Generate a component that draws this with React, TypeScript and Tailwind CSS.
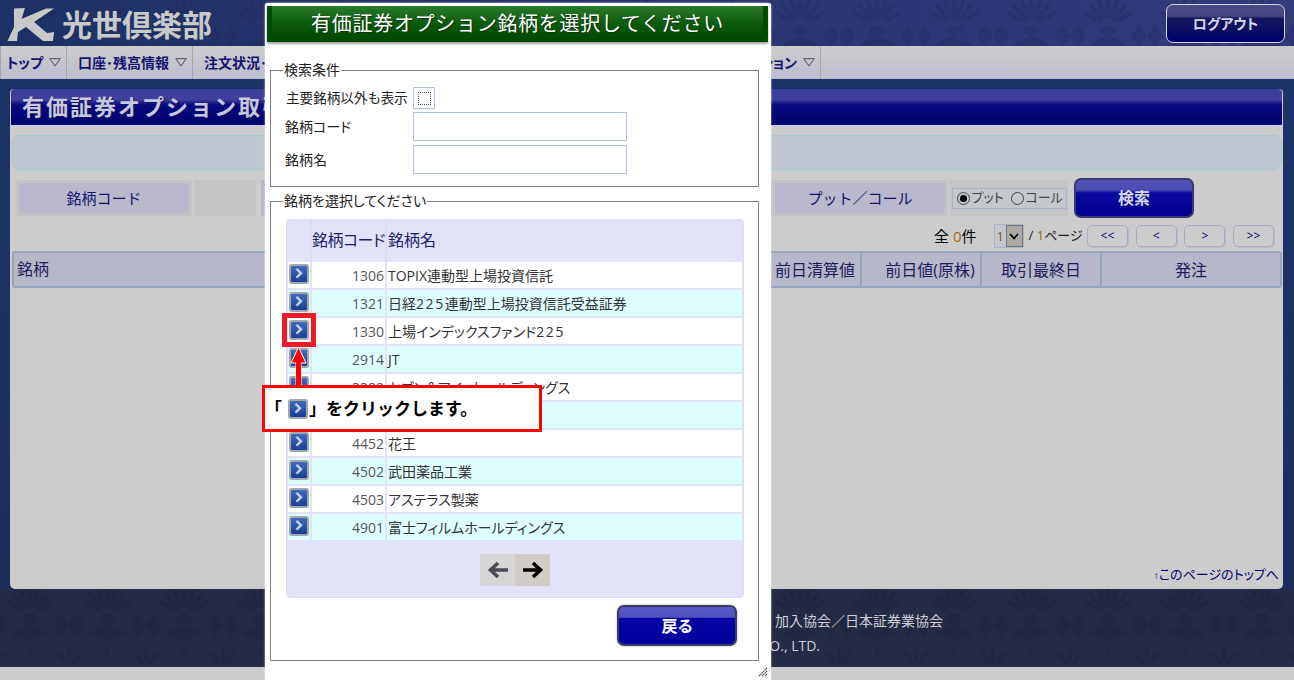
import React from "react";

function Damask({ id, color, opacity }: { id: string; color: string; opacity: number }) {
  return (
    <svg className="absolute inset-0 h-full w-full" aria-hidden="true">
      <defs>
        <pattern id={id} width="77" height="84" patternUnits="userSpaceOnUse" x="-8" y="-6">
          <g fill={color} opacity={opacity}>
            {[-60, -40, -20, 0, 20, 40, 60].map((a) => (
              <ellipse key={a} cx="38" cy="14" rx="2.6" ry="11" transform={`rotate(${a} 38 32)`} />
            ))}
            <ellipse cx="38" cy="36" rx="8" ry="5" />
            <path d="M38 40 C30 46 22 46 18 54 C26 52 32 52 38 60 C44 52 50 52 58 54 C54 46 46 46 38 40Z" />
            <path d="M0 42 L8 30 L16 42 L8 54Z M77 42 L69 30 L61 42 L69 54Z" />
            {[-40, 0, 40].map((a) => (
              <ellipse key={a} cx="0" cy="72" rx="2.2" ry="8" transform={`rotate(${a} 0 84)`} />
            ))}
            {[-40, 0, 40].map((a) => (
              <ellipse key={a} cx="77" cy="72" rx="2.2" ry="8" transform={`rotate(${a} 77 84)`} />
            ))}
            <circle cx="38" cy="68" r="3" />
            <circle cx="28" cy="74" r="2" />
            <circle cx="48" cy="74" r="2" />
          </g>
        </pattern>
      </defs>
      <rect width="100%" height="100%" fill={`url(#${id})`} />
    </svg>
  );
}

function Tri() {
  return (
    <svg width="12" height="9" viewBox="0 0 12 9" className="shrink-0" aria-hidden="true">
      <path d="M0.7 0.7H11.3L6 8Z" fill="none" stroke="#4a4a6a" strokeWidth="1" />
    </svg>
  );
}

function NavItem({ label, w }: { label: string; w: string }) {
  return (
    <div className={`flex h-full items-center justify-end gap-[6px] border-r border-[#a8a8a8] pr-[5px] ${w}`}>
      <span className="whitespace-nowrap text-[14px] font-bold text-[#14146e] [font-feature-settings:'palt']">{label}</span>
      <Tri />
    </div>
  );
}

function GoIcon() {
  return (
    <div className="flex h-[20px] w-[20px] items-center justify-center rounded-[3px] border-2 border-[#a2a7ad] bg-linear-to-b from-[#3f6cbc] to-[#1b3f96]">
      <svg width="10" height="12" viewBox="0 0 10 12" aria-hidden="true">
        <path d="M2.5 0.8L7 5.2L2.5 9.6" fill="none" stroke="#c6cfe4" strokeWidth="2.4" />
      </svg>
    </div>
  );
}

const d = (s: string) => <span className="tracking-[1.6px]">{s}</span>;

const rows: { code: string; name: React.ReactNode }[] = [
  { code: "1306", name: "TOPIX連動型上場投資信託" },
  { code: "1321", name: <>日経{d("225")}連動型上場投資信託受益証券</> },
  { code: "1330", name: <>上場インデックスファンド{d("225")}</> },
  { code: "2914", name: "JT" },
  { code: "3382", name: "セブン＆アイ・ホールディングス" },
  { code: "4063", name: "信越化学工業" },
  { code: "4452", name: "花王" },
  { code: "4502", name: "武田薬品工業" },
  { code: "4503", name: "アステラス製薬" },
  { code: "4901", name: "富士フィルムホールディングス" },
];

function HeadCell({ children, w, cls = "" }: { children: React.ReactNode; w: string; cls?: string }) {
  return (
    <div className={`flex h-full items-center justify-center border-r-2 border-[#94a5bd] text-[16px] text-[#1c1c60] ${w} ${cls}`}>
      {children}
    </div>
  );
}

function PageBtn({ label }: { label: string }) {
  return (
    <div className="flex h-[22px] w-[41px] items-center justify-center rounded-[5px] border border-[#a9a9c6] bg-[#cccccc] text-[12px] text-[#00006a] shadow-[1px_1px_0_#bcbcc8]">
      {label}
    </div>
  );
}

export default function App() {
  return (
    <div className="relative h-[680px] w-[1294px] overflow-hidden bg-[#cccccc] font-['Open_Sans','Noto_Sans_CJK_JP',sans-serif] text-[14px]">
      {/* header */}
      <header className="relative flex h-[46px] items-center justify-between overflow-hidden bg-linear-to-r from-[#1b3366] via-[#2a3470] to-[#333b7c] pl-[7px] pr-[9px]">
        <Damask id="dh" color="#23285e" opacity={0.4} />
        <div className="relative flex items-center gap-[7px]">
          <svg width="48" height="36" viewBox="0 0 48 36" aria-hidden="true">
            <path
              d="M7 3.5L18 3L14.5 14L39 3.5L47 3.5L27 17L40 28L47 27L46 36L36 36L19 22L11 27L10 36L0.5 36L7 22Z"
              fill="#c9c9c9"
            />
          </svg>
          <span className="font-['Noto_Sans_CJK_JP',serif] text-[30px] font-bold leading-none text-[#c9c9c9]">光世倶楽部</span>
        </div>
        <div className="relative flex h-[39px] w-[119px] items-center justify-center rounded-[7px] border border-[#d5d5dc] bg-[linear-gradient(#4a4a86_0,#46467f_30%,#17175f_36%,#00006a_100%)] text-[14px] font-bold text-[#d8d8e4] [font-feature-settings:'palt']">
          ログアウト
        </div>
      </header>

      {/* nav */}
      <nav className="flex h-[33px] bg-linear-to-b from-[#cccccc] to-[#bdbdce]">
        <div className="h-full w-[1px] bg-[#a8a8a8]" />
        <NavItem label="トップ" w="w-[66px]" />
        <NavItem label="口座･残高情報" w="w-[126px]" />
        <NavItem label="注文状況･約定照会" w="w-[154px]" />
        <NavItem label="株式取引" w="w-[120px]" />
        <NavItem label="有価証券オプション" w="w-[354px]" />
      </nav>

      {/* main */}
      <main className="h-[510px] bg-linear-to-b from-[#1b3468] to-[#1e2c5c] pl-[10px] pr-[11px] pt-[10px]">
        <section className="flex h-[500px] flex-col rounded-b-[5px] rounded-t-[4px] bg-[#cccccc]">
          <div className="relative mx-[1px] flex h-[36px] items-center overflow-hidden rounded-t-[4px] border-b border-[#0000a0] bg-[linear-gradient(#3c3c98_0,#40409c_30%,#0a0a80_45%,#00006e_100%)] pl-[11px]">
            <span className="text-[22px] font-bold tracking-[2px] text-[#c8c8dc] [text-shadow:1px_1px_1px_#111166]">
              有価証券オプション取引
            </span>
          </div>

          <div className="ml-[2px] mr-[1px] mt-[10px] h-[35px] rounded-[8px] border border-[#9ccfcf] bg-[#c0c6d0]" />

          <div className="mt-[8px] flex h-[40px] items-center pl-[6px]">
            <div className="flex h-[36px] w-[176px] items-center justify-center border-[3px] border-[#c4c4c4] bg-[#b9b8cc] text-[15px] text-[#14146e]">
              銘柄コード
            </div>
            <div className="ml-[2px] h-[36px] w-[62px] bg-[#c4c4c4]" />
            <div className="ml-[5px] h-[36px] w-[511px] bg-[#b9b8cc]" />
            <div className="flex h-[36px] w-[176px] items-center justify-center border-[3px] border-[#c4c4c4] bg-[#b9b8cc] text-[15px] text-[#14146e]">
              プット／コール
            </div>
            <div className="ml-[2px] flex h-[36px] w-[118px] items-center justify-center bg-[#c4c4c4]">
              <div className="flex h-[21px] w-[115px] items-center gap-[2px] whitespace-nowrap border border-[#a5b4cb] bg-[#c4c8cc] pl-[4px] text-[13px] text-[#444] [font-feature-settings:'palt']">
                <span className="flex h-[13px] w-[13px] shrink-0 items-center justify-center rounded-full border border-[#444]">
                  <span className="h-[7px] w-[7px] rounded-full bg-black" />
                </span>
                <span className="w-[37px]">プット</span>
                <span className="h-[13px] w-[13px] shrink-0 rounded-full border border-[#444]" />
                <span>コール</span>
              </div>
            </div>
            <div className="ml-[6px] flex h-[40px] w-[120px] items-center justify-center rounded-[7px] border-2 border-[#3a3a70] bg-[linear-gradient(#5252b8_0,#4a4ab0_28%,#0808a0_36%,#00008c_100%)] text-[16px] font-bold text-[#d4d4e6]">
              検索
            </div>
          </div>

          <div className="mt-[5px] flex h-[26px] items-center justify-end pr-[9px]">
            <span className="mr-[17px] text-[15px] text-black">
              全 <span className="text-[#a06a10]">0</span>件
            </span>
            <div className="flex h-[24px] w-[30px] border border-[#a5b4cb] bg-[#c4c8cc]">
              <span className="w-[11px] pl-[2px] text-[13px] leading-[22px] text-[#7a5a20]">1</span>
              <span className="flex flex-1 items-center justify-center border border-[#777] bg-[#aca9a2]">
                <svg width="10" height="7" viewBox="0 0 10 7" aria-hidden="true">
                  <path d="M1 1L5 5.4L9 1" fill="none" stroke="#000" strokeWidth="1.8" />
                </svg>
              </span>
            </div>
            <span className="ml-[5px] mr-[4px] whitespace-nowrap text-[13px] text-[#222]">
              / <span className="text-[#a06a10]">1</span>ページ
            </span>
            <div className="flex gap-[7.7px]">
              <PageBtn label="<<" />
              <PageBtn label="<" />
              <PageBtn label=">" />
              <PageBtn label=">>" />
            </div>
          </div>

          <div className="ml-[2px] mr-[1px] mt-[2px] flex h-[37px] items-center rounded-[3px] border-2 border-[#94a5bd] bg-[#b7b7ca]">
            <div className="h-full flex-1 pl-[3px] text-[16px] leading-[33px] text-[#1c1c60]">銘柄</div>
            <HeadCell w="w-[92px]">前日清算値</HeadCell>
            <HeadCell w="w-[120px]" cls="pl-[18px]">前日値(原株)</HeadCell>
            <HeadCell w="w-[120px]">取引最終日</HeadCell>
            <div className="flex h-full w-[178px] items-center justify-center text-[16px] text-[#1c1c60]">発注</div>
          </div>

          <div className="mt-auto pb-[5px] pr-[4px] text-right text-[13px] text-[#00006a] [font-feature-settings:'palt']">
            <span className="font-['Liberation_Sans',sans-serif] text-[10px]">↑</span>このページのトップへ
          </div>
        </section>
      </main>

      {/* footer */}
      <footer className="relative h-[78px] overflow-hidden bg-[#252a47] text-[#cfcfd4]">
        <Damask id="df" color="#1a1c30" opacity={0.3} />
        <div className="relative w-[943px] pt-[22px] text-right text-[14px] leading-[20px]">加入協会／日本証券業協会</div>
        <div className="relative mt-[5px] w-[820px] text-right text-[14px] leading-[20px]">CO., LTD.</div>
      </footer>

      {/* modal */}
      <div className="absolute left-[265px] top-[3px] h-[677px] w-[506px] rounded-t-[3px] bg-white px-[5px] text-[14px] text-[#222] shadow-[0_0_2px_#eeeeee] [font-feature-settings:'palt']">
        <div className="-mx-[3px] mt-[3px] flex h-[36px] w-[501px] items-center justify-center border-x-[5px] border-[#004c00] bg-linear-to-b from-[#2b7a2b] via-[#0b5a0b] to-[#004600] text-[20px] tracking-[0.7px] text-white shadow-[0_2px_2px_#a8a8a8] [font-feature-settings:normal] [text-shadow:1px_1px_1px_#113311]">
          有価証券オプション銘柄を選択してください
        </div>

        <fieldset className="mt-[21px] h-[124px] w-[489px] border border-[#808080]">
          <legend className="ml-[12px] px-[1px] text-[14px] leading-[14px]">検索条件</legend>
          <div className="pl-[14px]">
            <div className="mt-[10px] flex h-[22px] items-center">
              <span className="w-[128px] whitespace-nowrap pl-[1px] text-[13.6px]">主要銘柄以外も表示</span>
              <span className="flex h-[22px] w-[22px] items-center justify-center border border-[#b0c4de]">
                <span className="h-[13px] w-[13px] border border-dotted border-[#555]" />
              </span>
            </div>
            <div className="mt-[2px] flex h-[30px] items-center">
              <span className="w-[128px]">銘柄コード</span>
              <span className="h-[29px] w-[214px] border border-[#b0c4de] bg-white" />
            </div>
            <div className="mt-[3px] flex h-[30px] items-center">
              <span className="w-[128px]">銘柄名</span>
              <span className="h-[29px] w-[214px] border border-[#b0c4de] bg-white" />
            </div>
          </div>
        </fieldset>

        <fieldset className="mt-[7px] h-[467px] w-[489px] border border-[#808080]">
          <legend className="ml-[12px] px-[1px] text-[14px] leading-[14px]">銘柄を選択してください</legend>
          <div className="pl-[15px]">
            <div className="mt-[11px] h-[379px] w-[458px] rounded-[4px] border border-[#dcdcfa] bg-[#e2e3f8] px-[1px]">
              <div className="flex h-[42px] items-center text-[16px] text-[#1c1c6e]">
                <div className="w-[24px] self-stretch border-r-2 border-[#dcdcfa]" />
                <div className="w-[75px] self-stretch whitespace-nowrap border-r-2 border-[#dcdcfa] pt-[8px] tracking-[-0.5px]">銘柄コード</div>
                <div className="self-stretch pl-[1px] pt-[8px]">銘柄名</div>
              </div>
              <div className="flex flex-col gap-[2px]">
                {rows.map((r, i) => (
                  <div key={r.code} className="flex h-[26px] gap-[2px]">
                    <div className={`w-[22px] pl-[1px] pt-[2px] ${i % 2 ? "bg-[#dfffff]" : "bg-white"}`}>
                      <GoIcon />
                    </div>
                    <div className={`w-[73px] pr-[1px] pt-[3px] text-right leading-[22px] text-[#555] ${i % 2 ? "bg-[#dfffff]" : "bg-white"}`}>
                      {r.code}
                    </div>
                    <div className={`flex-1 whitespace-nowrap pl-[1px] pt-[3px] leading-[22px] text-[#333] ${i % 2 ? "bg-[#dfffff]" : "bg-white"}`}>
                      {r.name}
                    </div>
                  </div>
                ))}
              </div>
              <div className="mt-[14px] flex justify-center">
                <div className="flex h-[32px] w-[35px] items-center justify-center bg-[#d6d6d6]">
                  <svg width="22" height="18" viewBox="0 0 22 18" aria-hidden="true">
                    <path d="M21 9H5M11 2L3.5 9L11 16" fill="none" stroke="#4b4b55" strokeWidth="3.6" />
                  </svg>
                </div>
                <div className="flex h-[32px] w-[35px] items-center justify-center bg-[#d1cdc6]">
                  <svg width="22" height="18" viewBox="0 0 22 18" aria-hidden="true">
                    <path d="M1 9H17M11 2L18.5 9L11 16" fill="none" stroke="#000" strokeWidth="3.6" />
                  </svg>
                </div>
              </div>
            </div>
            <div className="mt-[7px] flex justify-end pr-[21px]">
              <div className="flex h-[41px] w-[120px] items-center justify-center rounded-[7px] border-2 border-[#3b3b66] bg-[linear-gradient(#5a5ac6_0,#5050bc_28%,#0505a4_30%,#00009c_100%)] text-[16px] font-bold text-white shadow-[0_0_2px_#999]">
                戻る
              </div>
            </div>
          </div>
        </fieldset>

        <svg className="absolute bottom-[3px] right-[3px]" width="10" height="10" viewBox="0 0 10 10" aria-hidden="true">
          <path d="M9 1L1 9M9 4L4 9M9 7L7 9" stroke="#444" strokeWidth="1.2" strokeDasharray="1.4 0.6" />
        </svg>
      </div>

      {/* annotation */}
      <div className="absolute left-[282px] top-[313px] h-[34px] w-[34px] border-[5px] border-[#ed1c24]" />
      <svg className="absolute left-[289px] top-[346px]" width="20" height="42" viewBox="0 0 20 42" aria-hidden="true">
        <path d="M9.5 1L17 17H12V42H7V17H2Z" fill="#ff0000" stroke="#ffffff" strokeWidth="1" />
        <rect x="7" y="16" width="5" height="26" fill="#ff0000" />
      </svg>
      <div className="absolute left-[262px] top-[385px] flex h-[47px] w-[280px] items-center border-[3px] border-[#ff0000] bg-white text-[17px] font-bold text-black">
        <span className="w-[23px]">「</span>
        <GoIcon />
        <span className="ml-[1px] whitespace-nowrap">」をクリックします。</span>
      </div>
    </div>
  );
}
